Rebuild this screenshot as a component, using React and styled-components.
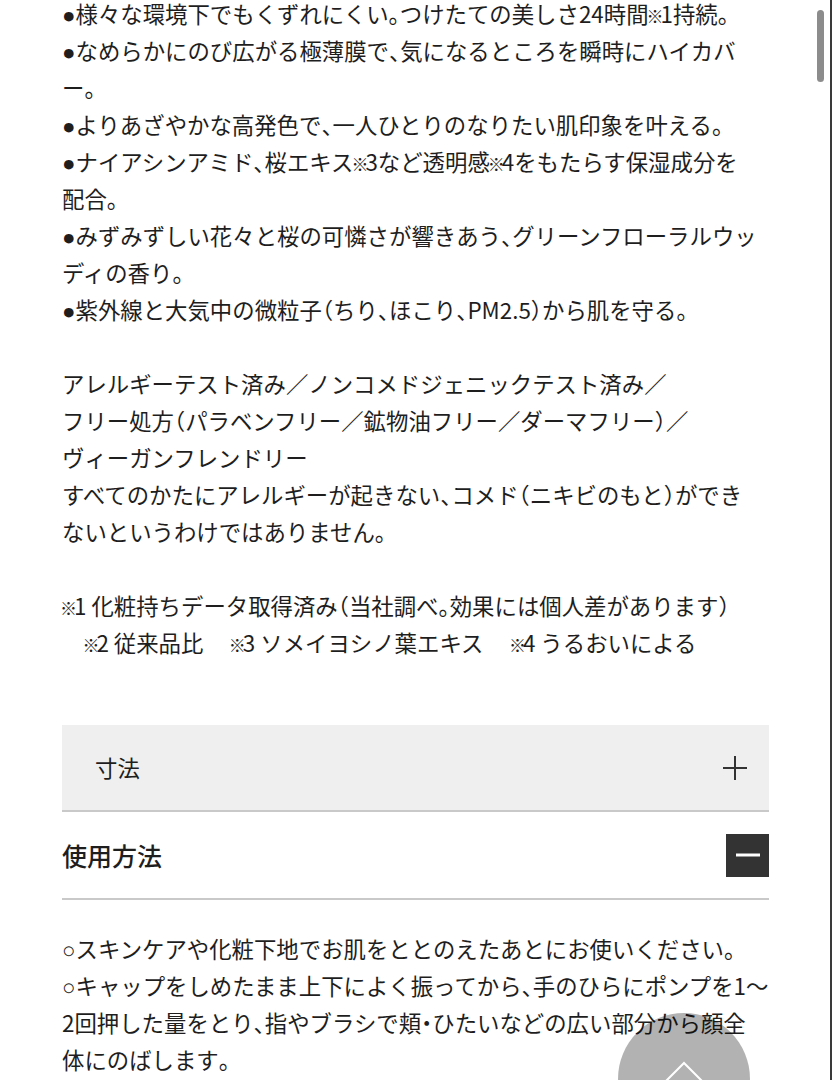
import React from "react";
import styled, { createGlobalStyle } from "styled-components";

const GlobalStyle = createGlobalStyle`
  html, body {
    margin: 0;
    padding: 0;
    background: #ffffff;
    overflow: hidden;
  }
  body {
    font-family: "Noto Sans CJK JP", "Noto Sans", sans-serif;
    color: #1e1e1e;
  }
`;

const Page = styled.main`
  width: 707px;
  padding: 0 0 0 62px;
  margin-top: -5px;
  font-size: 22.4px;
  line-height: 37px;
`;

const Paragraph = styled.p`
  margin: 0 0 ${(p) => p.$gap || 0}px 0;
  white-space: nowrap;
`;

const Bullet = styled.span`
  font-family: "Liberation Sans", sans-serif;
  line-height: 1;
`;

const Mark = styled.span`
  font-size: 17px;
  line-height: 1;
  margin-left: -2px;
  letter-spacing: -3px;
`;

const Punct = styled.span`
  font-feature-settings: "halt" 1;
`;

const Accordion = styled.section`
  margin-top: 64px;
  display: flex;
  flex-direction: column;
`;

const Item = styled.div`
  border-bottom: 2px solid #c9c9c9;
`;

const Header = styled.div`
  display: flex;
  align-items: center;
  justify-content: space-between;
  height: ${(p) => (p.$open ? 86 : 85)}px;
  padding: ${(p) => (p.$open ? "0" : "0 21px 0 33px")};
  background: ${(p) => (p.$open ? "transparent" : "#efefef")};
  font-size: ${(p) => (p.$open ? 25 : 22.4)}px;
  font-weight: ${(p) => (p.$open ? 500 : 400)};
  color: #1e1e1e;
`;

const MinusBox = styled.span`
  width: 43px;
  height: 43px;
  background: #333333;
  display: flex;
  align-items: center;
  justify-content: center;
`;

const Body = styled.div`
  padding-top: 30px;
`;

const Scrollbar = styled.div`
  position: fixed;
  top: 10px;
  left: 817px;
  width: 7px;
  height: 72px;
  border-radius: 4px;
  background: #8c8c8c;
`;

const EdgeLine = styled.div`
  position: fixed;
  top: 0;
  right: 0;
  width: 2px;
  height: 100%;
  background: #3a3a3a;
`;

const BackToTop = styled.button`
  position: fixed;
  left: 618px;
  top: 1013px;
  width: 132px;
  height: 132px;
  border-radius: 50%;
  border: none;
  padding: 48px 0 0;
  background: rgba(0, 0, 0, 0.3);
  display: flex;
  justify-content: center;
  align-items: flex-start;
`;

const PlusIcon = () => (
  <svg width="26" height="26" viewBox="0 0 26 26">
    <path d="M13 1v24M1 13h24" stroke="#333" strokeWidth="2" fill="none" />
  </svg>
);

const MinusIcon = () => (
  <svg width="24" height="4" viewBox="0 0 24 4">
    <path d="M0 2h24" stroke="#fff" strokeWidth="3" fill="none" />
  </svg>
);

const Chevron = () => (
  <svg width="44" height="24" viewBox="0 0 44 24">
    <path d="M2 22L22 2l20 20" stroke="#fff" strokeWidth="2" fill="none" />
  </svg>
);

const PUNCT = /([、。（）・])/;

function jp(text) {
  return text
    .split(PUNCT)
    .filter((t) => t !== "")
    .map((t, i) => (PUNCT.test(t) ? <Punct key={i}>{t}</Punct> : <React.Fragment key={i}>{t}</React.Fragment>));
}

const M = () => <Mark>※</Mark>;

export default function App() {
  return (
    <>
      <GlobalStyle />
      <Page>
        <Paragraph $gap={37}>
          <Bullet>●</Bullet>{jp("様々な環境下でもくずれにくい。つけたての美しさ24時間")}<M />{jp("1持続。")}
          <br />
          <Bullet>●</Bullet>{jp("なめらかにのび広がる極薄膜で、気になるところを瞬時にハイカバ")}
          <br />
          {jp("ー。")}
          <br />
          <Bullet>●</Bullet>{jp("よりあざやかな高発色で、一人ひとりのなりたい肌印象を叶える。")}
          <br />
          <Bullet>●</Bullet>{jp("ナイアシンアミド、桜エキス")}<M />3など透明感<M />4をもたらす保湿成分を
          <br />
          {jp("配合。")}
          <br />
          <Bullet>●</Bullet>{jp("みずみずしい花々と桜の可憐さが響きあう、グリーンフローラルウッ")}
          <br />
          {jp("ディの香り。")}
          <br />
          <Bullet>●</Bullet>{jp("紫外線と大気中の微粒子（ちり、ほこり、PM2.5）から肌を守る。")}
        </Paragraph>
        <Paragraph $gap={37}>
          アレルギーテスト済み／ノンコメドジェニックテスト済み／
          <br />
          {jp("フリー処方（パラベンフリー／鉱物油フリー／ダーマフリー）／")}
          <br />
          ヴィーガンフレンドリー
          <br />
          {jp("すべてのかたにアレルギーが起きない、コメド（ニキビのもと）ができ")}
          <br />
          {jp("ないというわけではありません。")}
        </Paragraph>
        <Paragraph>
          <M />{jp("1 化粧持ちデータ取得済み（当社調べ。効果には個人差があります）")}
          <br />
          {"\u3000"}<M />2 従来品比{"\u3000 "}<M />3 ソメイヨシノ葉エキス{"\u3000 "}<M />4 うるおいによる
        </Paragraph>

        <Accordion>
          <Item>
            <Header>
              <span>寸法</span>
              <PlusIcon />
            </Header>
          </Item>
          <Item>
            <Header $open>
              <span>使用方法</span>
              <MinusBox>
                <MinusIcon />
              </MinusBox>
            </Header>
          </Item>
          <Body>
            <Paragraph>
              <Bullet>○</Bullet>{jp("スキンケアや化粧下地でお肌をととのえたあとにお使いください。")}
              <br />
              <Bullet>○</Bullet>{jp("キャップをしめたまま上下によく振ってから、手のひらにポンプを1～")}
              <br />
              {jp("2回押した量をとり、指やブラシで頬・ひたいなどの広い部分から顔全")}
              <br />
              {jp("体にのばします。")}
              <br />
              <Bullet>○</Bullet>{jp("ご使用後はキャップをしっかりしめてください。")}
            </Paragraph>
          </Body>
        </Accordion>
      </Page>
      <Scrollbar />
      <EdgeLine />
      <BackToTop aria-label="ページトップへ">
        <Chevron />
      </BackToTop>
    </>
  );
}
